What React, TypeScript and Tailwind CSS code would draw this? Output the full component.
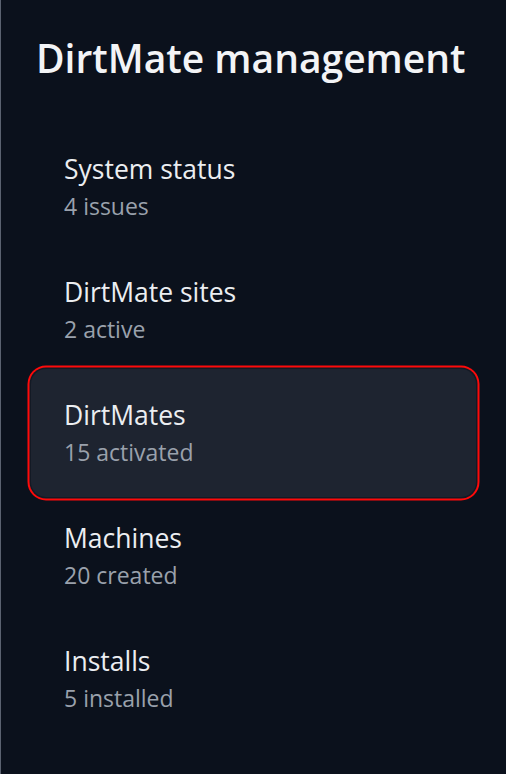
import React from "react";

const items = [
  { title: "System status", sub: "4 issues" },
  { title: "DirtMate sites", sub: "2 active" },
  { title: "DirtMates", sub: "15 activated", selected: true },
  { title: "Machines", sub: "20 created" },
  { title: "Installs", sub: "5 installed" },
];

export default function App() {
  return (
    <div
      className="w-[506px] h-[774px] bg-[#0b111c] border-l border-[#5b6270] overflow-hidden"
      style={{ fontFamily: "'Open Sans', 'Noto Sans', sans-serif" }}
    >
      <h1 className="pl-[35px] pt-[34px] text-[39px] leading-[48px] font-semibold text-[#f3f4f6]">
        DirtMate management
      </h1>
      <div className="px-[30px] pt-[43px] flex flex-col">
        {items.map((it) => (
          <div
            key={it.title}
            className={
              "rounded-[15px] pl-[33px] flex flex-col justify-center " +
              (it.selected
                ? "h-[128px] my-[-2.5px] bg-[#1e2430] shadow-[0_0_0_1.5px_#131a25,0_0_0_3.5px_#ff0a0a]"
                : "h-[123px]")
            }
          >
            <div className="text-[26.5px] leading-[32px] text-[#eceef1]">{it.title}</div>
            <div className="text-[23px] leading-[28px] mt-[7px] text-[#9aa1ac]">{it.sub}</div>
          </div>
        ))}
      </div>
    </div>
  );
}
